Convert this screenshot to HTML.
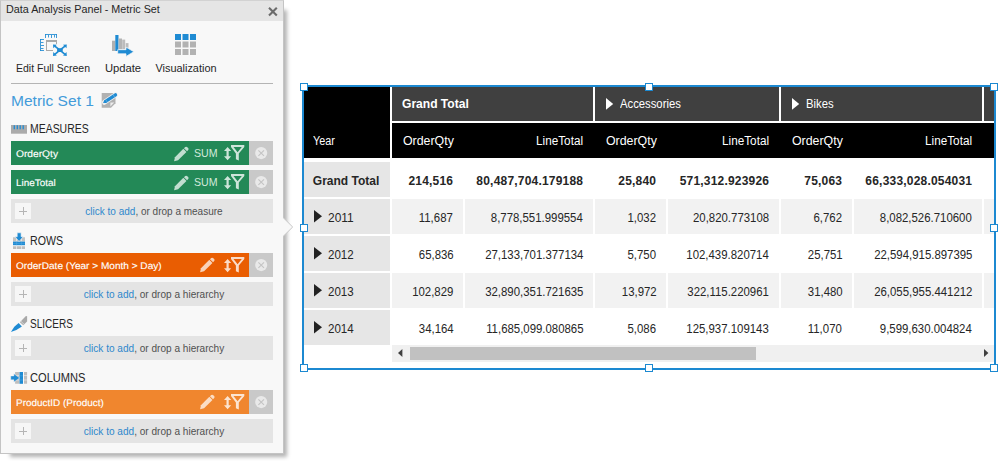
<!DOCTYPE html>
<html>
<head>
<meta charset="utf-8">
<title>Data Analysis Panel - Metric Set</title>
<style>
html,body{margin:0;padding:0;}
body{width:998px;height:461px;position:relative;overflow:hidden;background:#fff;font-family:"Liberation Sans",sans-serif;color:#222;}
#panel{position:absolute;left:0;top:0;width:284px;height:454px;box-sizing:border-box;background:#f8f8f8;border:1px solid #c4c4c4;border-top-color:#d2d2d2;box-shadow:6px 6px 4px -3.5px rgba(0,0,0,.3);}
#callout{position:absolute;left:283px;top:217px;width:12px;height:20px;}
#titlebar{position:absolute;left:1px;top:1px;width:282px;height:20px;background:#e5e5e5;}
#sep{position:absolute;left:11px;top:83px;width:262px;height:1px;background:#b4b4b4;}
.tx{position:absolute;white-space:nowrap;color:#262626;}
.f11{font-size:11px;line-height:14px;}
.f12{font-size:12px;line-height:16px;}
.ms{font-size:15px;line-height:20px;color:#439bda;}
.it{font-size:9.6px;line-height:14px;color:#fff;-webkit-text-stroke:0.14px #fff;text-rendering:geometricPrecision;}
.sum{font-size:11px;line-height:14px;color:#d2eadc;}
.ad{font-size:11px;line-height:14px;color:#505050;}
.ad b{font-weight:normal;color:#2e88cc;}
.w{color:#fff;}
.bd{font-weight:bold;}
.bar{position:absolute;left:11px;width:238px;height:24px;}
.green{background:#238957;}
.orange1{background:#e95d02;}
.orange2{background:#f0862e;}
.rm{position:absolute;left:249px;width:24px;height:24px;background:#c9c9c9;}
.add{position:absolute;left:11px;width:262px;height:24px;background:#e4e4e4;}
.add i{position:absolute;left:4px;top:4px;width:16px;height:16px;background:#f6f6f6;}
.add i:before{content:"";position:absolute;left:4px;top:7.5px;width:8px;height:1px;background:#b5b5b5;}
.add i:after{content:"";position:absolute;left:7.5px;top:4px;width:1px;height:8px;background:#b5b5b5;}
svg{position:absolute;overflow:visible;}
.c{position:absolute;}
#sel{position:absolute;left:302px;top:85px;width:690px;height:281px;border:2px solid #1c89d1;}
.h{position:absolute;width:6px;height:6px;background:#fff;border:1px solid #1c89d1;}

</style>
</head>
<body>
<div id="panel"></div>
<svg id="callout" width="12" height="20" viewBox="0 0 12 20"><path d="M0,0.4 L9.7,10 L0,19.6 Z" fill="#f8f8f8"/><path d="M0,0.4 L9.7,10 L0,19.6" fill="none" stroke="#c8c8c8" stroke-width="1"/></svg>
<div id="titlebar"></div>
<div id="t0" class="tx f11" style="top:2px;left:5.6px;transform-origin:0 50%;transform:scaleX(0.979);">Data Analysis Panel - Metric Set</div>
<svg style="left:268px;top:6.6px" width="10" height="9" viewBox="0 0 10 9"><path d="M1,0.7 L8.8,8.5 M8.8,0.7 L1,8.5" stroke="#6c6c6c" stroke-width="2.1" fill="none"/></svg>
<svg style="left:40px;top:34px" width="27" height="22" viewBox="0 0 27 22">
<path d="M5,0.5 H17 M5.5,0 V4 M8.5,1 V3.5 M11.5,1 V4 M14.5,1 V3.5 M16.5,0 V4" stroke="#1f8bd3" stroke-width="1" stroke-opacity="0.85" fill="none"/>
<path d="M0.5,5 V17 M0,5.5 H4 M1,8.5 H3.5 M1,11.5 H4 M1,14.5 H3.5 M0,16.5 H4" stroke="#1f8bd3" stroke-width="1" stroke-opacity="0.85" fill="none"/>
<path d="M6,6 H17 V10 H16 V8 H7 V16 H13 V17 H6 Z" fill="#a9a9a9"/>
<g fill="#1f8bd3"><rect x="17.1" y="14.2" width="5.6" height="3.9" rx="1"/>
<path d="M14.8,12.1 L19.9,16.1 L25,12.1 M14.8,20.3 L19.9,16.1 L25,20.3" stroke="#1f8bd3" stroke-width="1.7" fill="none"/>
<path d="M13,10.4 L16.8,10.7 L13.3,14.2 Z M26.8,10.4 L23,10.7 L26.5,14.2 Z M13,21.9 L16.8,21.6 L13.3,18.1 Z M26.8,21.9 L23,21.6 L26.5,18.1 Z"/></g>
</svg>
<svg style="left:112px;top:35px" width="22" height="21" viewBox="0 0 22 21">
<rect x="0" y="5.7" width="3.2" height="10.3" fill="#b0b0b0"/>
<rect x="3.3" y="0" width="3.2" height="16" fill="#1f8bd3"/>
<rect x="6.7" y="3.5" width="3.3" height="10.5" fill="#b4b4b4"/>
<rect x="10.2" y="4.6" width="3" height="9.4" fill="#bcbcbc"/>
<rect x="13.7" y="8.1" width="2.8" height="4.6" fill="#bcbcbc"/>
<path d="M5.7,14.7 H14 V12.1 L21.8,16.75 L14,21.4 V18.8 H5.7 Z" fill="#1f8bd3" stroke="#f8f8f8" stroke-width="0.7"/>
</svg>
<svg style="left:175px;top:34px" width="21" height="21" viewBox="0 0 21 21"><rect x="0.0" y="0.0" width="6" height="6" fill="#1f8bd3"/><rect x="7.5" y="0.0" width="6" height="6" fill="#1f8bd3"/><rect x="15.0" y="0.0" width="6" height="6" fill="#1f8bd3"/><rect x="0.0" y="7.5" width="6" height="6" fill="#b2b2b2"/><rect x="7.5" y="7.5" width="6" height="6" fill="#b2b2b2"/><rect x="15.0" y="7.5" width="6" height="6" fill="#b2b2b2"/><rect x="0.0" y="15.0" width="6" height="6" fill="#b2b2b2"/><rect x="7.5" y="15.0" width="6" height="6" fill="#b2b2b2"/><rect x="15.0" y="15.0" width="6" height="6" fill="#b2b2b2"/></svg>
<div id="t1" class="tx f11" style="top:61px;left:53.1px;transform-origin:50% 50%;transform:translateX(-50%) scaleX(0.953);">Edit Full Screen</div>
<div id="t2" class="tx f11" style="top:61px;left:122.5px;transform-origin:50% 50%;transform:translateX(-50%) scaleX(1.020);">Update</div>
<div id="t3" class="tx f11" style="top:61px;left:185.6px;transform-origin:50% 50%;transform:translateX(-50%) scaleX(0.992);">Visualization</div>
<div id="sep"></div>
<div id="t4" class="tx ms" style="top:90.8px;left:11.2px;transform-origin:0 50%;transform:scaleX(1.036);">Metric Set 1</div>
<svg style="left:101px;top:93px" width="17" height="15" viewBox="0 0 17 15">
<path d="M0.7,0 H14.5 V10.2 L10,14.8 H0.7 Z" fill="#b1b1b1"/>
<path d="M13.2,9.6 L9.4,13.4 V9.6 Z" fill="#ececec"/>
<path d="M3.4,9.3 L14.4,1.9" stroke="#efefef" stroke-width="4.9" stroke-linecap="round" fill="none"/>
<path d="M2,10.1 L3.6,6.9 L5.5,9.8 Z" fill="#1f8bd3"/>
<path d="M4.6,8.35 L14.5,1.8" stroke="#1f8bd3" stroke-width="3.3" stroke-linecap="round" fill="none"/>
<path d="M4.2,5.8 L6.4,9.2 M11.6,0.9 L13.8,4.3" stroke="#8cc4ea" stroke-width="0.5" fill="none"/>
</svg>
<svg style="left:11px;top:124.5px" width="16" height="9" viewBox="0 0 16 9"><rect width="16" height="8.7" fill="#ababab"/>
<path d="M3.3,0.3 V4.3 M6.3,0.3 V4.3 M9.2,0.3 V4.3 M12.2,0.3 V4.3" stroke="#1f8bd3" stroke-width="1.3"/></svg>
<div id="t5" class="tx f12" style="top:120.5px;left:30.3px;transform-origin:0 50%;transform:scaleX(0.871);">MEASURES</div>
<div class="bar green" style="top:141px"></div>
<div id="t6" class="tx it" style="top:147.6px;left:15.8px;transform-origin:0 50%;transform:scaleX(1.065);">OrderQty</div>
<svg style="left:174.1px;top:146.5px" width="15" height="15" viewBox="0 0 15 15"><g fill="#fff" fill-opacity="0.72">
<path d="M0.1,14.2 L0.95,10.25 L9.35,1.85 L12.45,4.95 L4.05,13.35 Z"/>
<path d="M9.95,1.25 L11.2,0.1 Q12.4,-0.8 13.6,0.4 L14,0.8 Q15.2,2 14.2,3.1 L13.05,4.35 Z"/></g></svg>
<div id="t7" class="tx sum" style="top:146px;left:194.0px;transform-origin:0 50%;transform:scaleX(0.965);">SUM</div>
<svg style="left:224px;top:146.6px" width="7.2" height="13.2" viewBox="0 0 7.2 13.2"><g fill="#fff" fill-opacity="0.78">
<path d="M3.6,0 L7.2,4 H4.7 V9.2 H7.2 L3.6,13.2 L0,9.2 H2.5 V4 H0 Z"/></g></svg>
<svg style="left:231.3px;top:145.1px" width="13.3" height="15.5" viewBox="0 0 13.3 15.5">
<path fill-rule="evenodd" d="M0,0 H13.3 V2 L7.8,8.4 V15.5 L4.9,14.2 V8.4 L0,2 Z M2.5,2 H10.8 L6.6,7.2 Z" fill="#fff" fill-opacity="0.78"/></svg>
<div class="rm" style="top:141px"><svg style="left:6px;top:5.9px" width="12.4" height="12.4" viewBox="0 0 12.4 12.4"><circle cx="6.2" cy="6.1" r="6.05" fill="#e9e9e9"/><path d="M3.4,3.3 L9,8.9 M9,3.3 L3.4,8.9" stroke="#c4c4c4" stroke-width="1.1" fill="none"/></svg></div>
<div class="bar green" style="top:170px"></div>
<div id="t8" class="tx it" style="top:176.6px;left:15.8px;transform-origin:0 50%;transform:scaleX(1.034);">LineTotal</div>
<svg style="left:174.1px;top:175.5px" width="15" height="15" viewBox="0 0 15 15"><g fill="#fff" fill-opacity="0.72">
<path d="M0.1,14.2 L0.95,10.25 L9.35,1.85 L12.45,4.95 L4.05,13.35 Z"/>
<path d="M9.95,1.25 L11.2,0.1 Q12.4,-0.8 13.6,0.4 L14,0.8 Q15.2,2 14.2,3.1 L13.05,4.35 Z"/></g></svg>
<div id="t9" class="tx sum" style="top:175px;left:194.0px;transform-origin:0 50%;transform:scaleX(0.965);">SUM</div>
<svg style="left:224px;top:175.6px" width="7.2" height="13.2" viewBox="0 0 7.2 13.2"><g fill="#fff" fill-opacity="0.78">
<path d="M3.6,0 L7.2,4 H4.7 V9.2 H7.2 L3.6,13.2 L0,9.2 H2.5 V4 H0 Z"/></g></svg>
<svg style="left:231.3px;top:174.1px" width="13.3" height="15.5" viewBox="0 0 13.3 15.5">
<path fill-rule="evenodd" d="M0,0 H13.3 V2 L7.8,8.4 V15.5 L4.9,14.2 V8.4 L0,2 Z M2.5,2 H10.8 L6.6,7.2 Z" fill="#fff" fill-opacity="0.78"/></svg>
<div class="rm" style="top:170px"><svg style="left:6px;top:5.9px" width="12.4" height="12.4" viewBox="0 0 12.4 12.4"><circle cx="6.2" cy="6.1" r="6.05" fill="#e9e9e9"/><path d="M3.4,3.3 L9,8.9 M9,3.3 L3.4,8.9" stroke="#c4c4c4" stroke-width="1.1" fill="none"/></svg></div>
<div class="add" style="top:199px"><i></i></div>
<div id="t10" class="tx ad" style="top:204px;left:154.2px;transform-origin:50% 50%;transform:translateX(-50%) scaleX(0.909);"><b>click to add</b>, or drop a measure</div>
<svg style="left:13px;top:232.8px" width="12" height="16" viewBox="0 0 12 16">
<path d="M0,4.2 H3.3 V8.4 H0 Z M3.9,4.2 H8.1 V8.4 H3.9 Z M8.7,4.2 H12 V8.4 H8.7 Z" fill="#c2c2c2"/>
<rect x="0" y="8.6" width="12" height="3.6" fill="#1f8bd3"/>
<path d="M3.6,8.6 V12.2 M8.4,8.6 V12.2 M0,10.4 H12" stroke="#55a8e0" stroke-width="0.5"/>
<path d="M0,13.2 H3.3 V16 H0 Z M3.9,13.2 H8.1 V16 H3.9 Z M8.7,13.2 H12 V16 H8.7 Z" fill="#bdbdbd"/>
<path d="M4.2,-0.2 H8.1 V3.7 H10.2 L6.1,8.5 L2,3.7 H4.2 Z" fill="#1f8bd3" stroke="#f4f4f4" stroke-width="0.6"/></svg>
<div id="t11" class="tx f12" style="top:233px;left:30.0px;transform-origin:0 50%;transform:scaleX(0.886);">ROWS</div>
<div class="bar orange1" style="top:253px"></div>
<div id="t12" class="tx it" style="top:259.6px;left:15.8px;transform-origin:0 50%;transform:scaleX(1.049);">OrderDate (Year &gt; Month &gt; Day)</div>
<svg style="left:200px;top:258.4px" width="15" height="15" viewBox="0 0 15 15"><g fill="#fff" fill-opacity="0.72">
<path d="M0.1,14.2 L0.95,10.25 L9.35,1.85 L12.45,4.95 L4.05,13.35 Z"/>
<path d="M9.95,1.25 L11.2,0.1 Q12.4,-0.8 13.6,0.4 L14,0.8 Q15.2,2 14.2,3.1 L13.05,4.35 Z"/></g></svg>
<svg style="left:224px;top:258.6px" width="7.2" height="13.2" viewBox="0 0 7.2 13.2"><g fill="#fff" fill-opacity="0.78">
<path d="M3.6,0 L7.2,4 H4.7 V9.2 H7.2 L3.6,13.2 L0,9.2 H2.5 V4 H0 Z"/></g></svg>
<svg style="left:231.3px;top:257.1px" width="13.3" height="15.5" viewBox="0 0 13.3 15.5">
<path fill-rule="evenodd" d="M0,0 H13.3 V2 L7.8,8.4 V15.5 L4.9,14.2 V8.4 L0,2 Z M2.5,2 H10.8 L6.6,7.2 Z" fill="#fff" fill-opacity="0.78"/></svg>
<div class="rm" style="top:253px"><svg style="left:6px;top:5.9px" width="12.4" height="12.4" viewBox="0 0 12.4 12.4"><circle cx="6.2" cy="6.1" r="6.05" fill="#e9e9e9"/><path d="M3.4,3.3 L9,8.9 M9,3.3 L3.4,8.9" stroke="#c4c4c4" stroke-width="1.1" fill="none"/></svg></div>
<div class="add" style="top:282px"><i></i></div>
<div id="t13" class="tx ad" style="top:287px;left:154.2px;transform-origin:50% 50%;transform:translateX(-50%) scaleX(0.915);"><b>click to add</b>, or drop a hierarchy</div>
<svg style="left:11px;top:316px" width="16" height="16" viewBox="0 0 16 16">
<path d="M-0.1,15.9 Q2.6,10.6 7.6,7.1 L10.9,10.4 Q6.4,14 -0.1,15.9 Z" fill="#1f8bd3"/>
<path d="M8.9,6.3 L14.9,0.1 L16.1,0.3 V5.4 L12.3,9.3 Z" fill="#a9a9a9"/>
<path d="M9.9,5.3 L13.2,8.4" stroke="#ececec" stroke-width="0.7"/></svg>
<div id="t14" class="tx f12" style="top:316px;left:30.1px;transform-origin:0 50%;transform:scaleX(0.835);">SLICERS</div>
<div class="add" style="top:336px"><i></i></div>
<div id="t15" class="tx ad" style="top:341px;left:154.2px;transform-origin:50% 50%;transform:translateX(-50%) scaleX(0.915);"><b>click to add</b>, or drop a hierarchy</div>
<svg style="left:11px;top:372px" width="16" height="12" viewBox="0 0 16 12">
<path d="M4.1,0 H8.3 V3.5 H4.1 Z M4.1,4.1 H8.3 V7.7 H4.1 Z M4.1,8.3 H8.3 V11.8 H4.1 Z M13,0 H16.1 V3.5 H13 Z M13,4.1 H16.1 V7.7 H13 Z M13,8.3 H16.1 V11.8 H13 Z" fill="#bebebe"/>
<rect x="8.5" y="0" width="3.5" height="11.8" fill="#1f8bd3"/>
<path d="M8.5,3.8 H12 M8.5,8 H12" stroke="#55a8e0" stroke-width="0.5"/>
<path d="M-0.2,4 H2.9 V1.7 L8.5,5.9 L2.9,10.1 V7.8 H-0.2 Z" fill="#1f8bd3" stroke="#f0f0f0" stroke-width="0.4"/></svg>
<div id="t16" class="tx f12" style="top:370px;left:30.3px;transform-origin:0 50%;transform:scaleX(0.925);">COLUMNS</div>
<div class="bar orange2" style="top:390px"></div>
<div id="t17" class="tx it" style="top:396.6px;left:15.8px;transform-origin:0 50%;transform:scaleX(1.036);">ProductID (Product)</div>
<svg style="left:200px;top:395.4px" width="15" height="15" viewBox="0 0 15 15"><g fill="#fff" fill-opacity="0.72">
<path d="M0.1,14.2 L0.95,10.25 L9.35,1.85 L12.45,4.95 L4.05,13.35 Z"/>
<path d="M9.95,1.25 L11.2,0.1 Q12.4,-0.8 13.6,0.4 L14,0.8 Q15.2,2 14.2,3.1 L13.05,4.35 Z"/></g></svg>
<svg style="left:224px;top:395.6px" width="7.2" height="13.2" viewBox="0 0 7.2 13.2"><g fill="#fff" fill-opacity="0.78">
<path d="M3.6,0 L7.2,4 H4.7 V9.2 H7.2 L3.6,13.2 L0,9.2 H2.5 V4 H0 Z"/></g></svg>
<svg style="left:231.3px;top:394.1px" width="13.3" height="15.5" viewBox="0 0 13.3 15.5">
<path fill-rule="evenodd" d="M0,0 H13.3 V2 L7.8,8.4 V15.5 L4.9,14.2 V8.4 L0,2 Z M2.5,2 H10.8 L6.6,7.2 Z" fill="#fff" fill-opacity="0.78"/></svg>
<div class="rm" style="top:390px"><svg style="left:6px;top:5.9px" width="12.4" height="12.4" viewBox="0 0 12.4 12.4"><circle cx="6.2" cy="6.1" r="6.05" fill="#e9e9e9"/><path d="M3.4,3.3 L9,8.9 M9,3.3 L3.4,8.9" stroke="#c4c4c4" stroke-width="1.1" fill="none"/></svg></div>
<div class="add" style="top:419px"><i></i></div>
<div id="t18" class="tx ad" style="top:424px;left:154.2px;transform-origin:50% 50%;transform:translateX(-50%) scaleX(0.915);"><b>click to add</b>, or drop a hierarchy</div>
<div class="c" style="left:304px;top:87px;width:86px;height:71px;background:#000"></div>
<div class="c" style="left:392px;top:87px;width:201px;height:34px;background:#404040"></div>
<div class="c" style="left:595px;top:87px;width:184px;height:34px;background:#404040"></div>
<div class="c" style="left:781px;top:87px;width:201px;height:34px;background:#404040"></div>
<div class="c" style="left:984px;top:87px;width:10px;height:34px;background:#404040"></div>
<div class="c" style="left:392px;top:123px;width:602px;height:35px;background:#000"></div>
<div id="t19" class="tx f12 w bd" style="top:96px;left:401.6px;transform-origin:0 50%;transform:scaleX(1.005);">Grand Total</div>
<svg style="left:606.2px;top:98px" width="7.2" height="11.8" viewBox="0 0 7.2 11.8"><path d="M0,0 L7.2,5.9 L0,11.8 Z" fill="#fff"/></svg>
<div id="t20" class="tx f12 w" style="top:96px;left:619.8px;transform-origin:0 50%;transform:scaleX(0.940);">Accessories</div>
<svg style="left:792.2px;top:98px" width="7.2" height="11.8" viewBox="0 0 7.2 11.8"><path d="M0,0 L7.2,5.9 L0,11.8 Z" fill="#fff"/></svg>
<div id="t21" class="tx f12 w" style="top:96px;left:806.2px;transform-origin:0 50%;transform:scaleX(0.941);">Bikes</div>
<div id="t22" class="tx f12 w" style="top:133px;left:313.2px;transform-origin:0 50%;transform:scaleX(0.899);">Year</div>
<div id="t23" class="tx f12 w" style="top:133px;left:403px;transform-origin:0 50%;transform:scaleX(1.030);">OrderQty</div>
<div id="t24" class="tx f12 w" style="top:133px;right:415px;transform-origin:100% 50%;transform:scaleX(0.978);">LineTotal</div>
<div id="t25" class="tx f12 w" style="top:133px;left:606px;transform-origin:0 50%;transform:scaleX(1.030);">OrderQty</div>
<div id="t26" class="tx f12 w" style="top:133px;right:229px;transform-origin:100% 50%;transform:scaleX(0.978);">LineTotal</div>
<div id="t27" class="tx f12 w" style="top:133px;left:792px;transform-origin:0 50%;transform:scaleX(1.030);">OrderQty</div>
<div id="t28" class="tx f12 w" style="top:133px;right:26px;transform-origin:100% 50%;transform:scaleX(0.978);">LineTotal</div>
<div class="c" style="left:304px;top:162px;width:86px;height:34.599999999999994px;background:#e6e6e6"></div>
<div id="t29" class="tx f12 bd" style="top:172.5px;left:312.8px;transform-origin:0 50%;">Grand Total</div>
<div id="t30" class="tx f12 bd" style="top:172.5px;right:544.8px;transform-origin:100% 50%;letter-spacing:0.2px;">214,516</div>
<div id="t31" class="tx f12 bd" style="top:172.5px;right:414.79999999999995px;transform-origin:100% 50%;letter-spacing:0.2px;">80,487,704.179188</div>
<div id="t32" class="tx f12 bd" style="top:172.5px;right:341.79999999999995px;transform-origin:100% 50%;letter-spacing:0.2px;">25,840</div>
<div id="t33" class="tx f12 bd" style="top:172.5px;right:228.79999999999995px;transform-origin:100% 50%;letter-spacing:0.2px;">571,312.923926</div>
<div id="t34" class="tx f12 bd" style="top:172.5px;right:155.79999999999995px;transform-origin:100% 50%;letter-spacing:0.2px;">75,063</div>
<div id="t35" class="tx f12 bd" style="top:172.5px;right:25.799999999999955px;transform-origin:100% 50%;letter-spacing:0.2px;">66,333,028.054031</div>
<div class="c" style="left:304px;top:199px;width:86px;height:34.599999999999994px;background:#e6e6e6"></div>
<div class="c" style="left:392px;top:199px;width:71px;height:34.599999999999994px;background:#f2f2f2"></div>
<div class="c" style="left:465px;top:199px;width:128px;height:34.599999999999994px;background:#f2f2f2"></div>
<div class="c" style="left:595px;top:199px;width:71px;height:34.599999999999994px;background:#f2f2f2"></div>
<div class="c" style="left:668px;top:199px;width:111px;height:34.599999999999994px;background:#f2f2f2"></div>
<div class="c" style="left:781px;top:199px;width:71px;height:34.599999999999994px;background:#f2f2f2"></div>
<div class="c" style="left:854px;top:199px;width:128px;height:34.599999999999994px;background:#f2f2f2"></div>
<div class="c" style="left:984px;top:199px;width:10px;height:34.599999999999994px;background:#f2f2f2"></div>
<svg style="left:314px;top:210.3px" width="8" height="12.6" viewBox="0 0 8 12.6"><path d="M0,0 L8,6.3 L0,12.6 Z" fill="#222"/></svg>
<div id="t36" class="tx f12" style="top:209.5px;left:328.2px;transform-origin:0 50%;transform:scaleX(0.996);">2011</div>
<div id="t37" class="tx f12" style="top:209.5px;right:544.8px;transform-origin:100% 50%;transform:scaleX(0.95);">11,687</div>
<div id="t38" class="tx f12" style="top:209.5px;right:414.79999999999995px;transform-origin:100% 50%;transform:scaleX(0.95);">8,778,551.999554</div>
<div id="t39" class="tx f12" style="top:209.5px;right:341.79999999999995px;transform-origin:100% 50%;transform:scaleX(0.95);">1,032</div>
<div id="t40" class="tx f12" style="top:209.5px;right:228.79999999999995px;transform-origin:100% 50%;transform:scaleX(0.95);">20,820.773108</div>
<div id="t41" class="tx f12" style="top:209.5px;right:155.79999999999995px;transform-origin:100% 50%;transform:scaleX(0.95);">6,762</div>
<div id="t42" class="tx f12" style="top:209.5px;right:25.799999999999955px;transform-origin:100% 50%;transform:scaleX(0.95);">8,082,526.710600</div>
<div class="c" style="left:304px;top:236px;width:86px;height:34.60000000000002px;background:#e6e6e6"></div>
<svg style="left:314px;top:247.3px" width="8" height="12.6" viewBox="0 0 8 12.6"><path d="M0,0 L8,6.3 L0,12.6 Z" fill="#222"/></svg>
<div id="t43" class="tx f12" style="top:246.5px;left:328.2px;transform-origin:0 50%;transform:scaleX(0.962);">2012</div>
<div id="t44" class="tx f12" style="top:246.5px;right:544.8px;transform-origin:100% 50%;transform:scaleX(0.95);">65,836</div>
<div id="t45" class="tx f12" style="top:246.5px;right:414.79999999999995px;transform-origin:100% 50%;transform:scaleX(0.95);">27,133,701.377134</div>
<div id="t46" class="tx f12" style="top:246.5px;right:341.79999999999995px;transform-origin:100% 50%;transform:scaleX(0.95);">5,750</div>
<div id="t47" class="tx f12" style="top:246.5px;right:228.79999999999995px;transform-origin:100% 50%;transform:scaleX(0.95);">102,439.820714</div>
<div id="t48" class="tx f12" style="top:246.5px;right:155.79999999999995px;transform-origin:100% 50%;transform:scaleX(0.95);">25,751</div>
<div id="t49" class="tx f12" style="top:246.5px;right:25.799999999999955px;transform-origin:100% 50%;transform:scaleX(0.95);">22,594,915.897395</div>
<div class="c" style="left:304px;top:273px;width:86px;height:34.60000000000002px;background:#e6e6e6"></div>
<div class="c" style="left:392px;top:273px;width:71px;height:34.60000000000002px;background:#f2f2f2"></div>
<div class="c" style="left:465px;top:273px;width:128px;height:34.60000000000002px;background:#f2f2f2"></div>
<div class="c" style="left:595px;top:273px;width:71px;height:34.60000000000002px;background:#f2f2f2"></div>
<div class="c" style="left:668px;top:273px;width:111px;height:34.60000000000002px;background:#f2f2f2"></div>
<div class="c" style="left:781px;top:273px;width:71px;height:34.60000000000002px;background:#f2f2f2"></div>
<div class="c" style="left:854px;top:273px;width:128px;height:34.60000000000002px;background:#f2f2f2"></div>
<div class="c" style="left:984px;top:273px;width:10px;height:34.60000000000002px;background:#f2f2f2"></div>
<svg style="left:314px;top:284.3px" width="8" height="12.6" viewBox="0 0 8 12.6"><path d="M0,0 L8,6.3 L0,12.6 Z" fill="#222"/></svg>
<div id="t50" class="tx f12" style="top:283.5px;left:328.2px;transform-origin:0 50%;transform:scaleX(0.962);">2013</div>
<div id="t51" class="tx f12" style="top:283.5px;right:544.8px;transform-origin:100% 50%;transform:scaleX(0.95);">102,829</div>
<div id="t52" class="tx f12" style="top:283.5px;right:414.79999999999995px;transform-origin:100% 50%;transform:scaleX(0.95);">32,890,351.721635</div>
<div id="t53" class="tx f12" style="top:283.5px;right:341.79999999999995px;transform-origin:100% 50%;transform:scaleX(0.95);">13,972</div>
<div id="t54" class="tx f12" style="top:283.5px;right:228.79999999999995px;transform-origin:100% 50%;transform:scaleX(0.95);">322,115.220961</div>
<div id="t55" class="tx f12" style="top:283.5px;right:155.79999999999995px;transform-origin:100% 50%;transform:scaleX(0.95);">31,480</div>
<div id="t56" class="tx f12" style="top:283.5px;right:25.799999999999955px;transform-origin:100% 50%;transform:scaleX(0.95);">26,055,955.441212</div>
<div class="c" style="left:304px;top:310px;width:86px;height:34.60000000000002px;background:#e6e6e6"></div>
<svg style="left:314px;top:321.3px" width="8" height="12.6" viewBox="0 0 8 12.6"><path d="M0,0 L8,6.3 L0,12.6 Z" fill="#222"/></svg>
<div id="t57" class="tx f12" style="top:320.5px;left:328.2px;transform-origin:0 50%;transform:scaleX(0.962);">2014</div>
<div id="t58" class="tx f12" style="top:320.5px;right:544.8px;transform-origin:100% 50%;transform:scaleX(0.95);">34,164</div>
<div id="t59" class="tx f12" style="top:320.5px;right:414.79999999999995px;transform-origin:100% 50%;transform:scaleX(0.95);">11,685,099.080865</div>
<div id="t60" class="tx f12" style="top:320.5px;right:341.79999999999995px;transform-origin:100% 50%;transform:scaleX(0.95);">5,086</div>
<div id="t61" class="tx f12" style="top:320.5px;right:228.79999999999995px;transform-origin:100% 50%;transform:scaleX(0.95);">125,937.109143</div>
<div id="t62" class="tx f12" style="top:320.5px;right:155.79999999999995px;transform-origin:100% 50%;transform:scaleX(0.95);">11,070</div>
<div id="t63" class="tx f12" style="top:320.5px;right:25.799999999999955px;transform-origin:100% 50%;transform:scaleX(0.95);">9,599,630.004824</div>
<div class="c" style="left:392px;top:345px;width:602px;height:17px;background:#f0f0f0"></div>
<div class="c" style="left:410px;top:347px;width:346px;height:13px;background:#c1c1c1"></div>
<svg style="left:397.8px;top:349.4px" width="4.4" height="8" viewBox="0 0 4.4 8"><path d="M4.4,0 L0,4 L4.4,8 Z" fill="#404040"/></svg>
<svg style="left:984.3px;top:349.4px" width="4.4" height="8" viewBox="0 0 4.4 8"><path d="M0,0 L4.4,4 L0,8 Z" fill="#404040"/></svg>
<div id="sel"></div>
<div class="h" style="left:300px;top:83px"></div>
<div class="h" style="left:645px;top:83px"></div>
<div class="h" style="left:990px;top:83px"></div>
<div class="h" style="left:300px;top:224px"></div>
<div class="h" style="left:990px;top:224px"></div>
<div class="h" style="left:300px;top:364px"></div>
<div class="h" style="left:645px;top:364px"></div>
<div class="h" style="left:990px;top:364px"></div>
</body>
</html>
